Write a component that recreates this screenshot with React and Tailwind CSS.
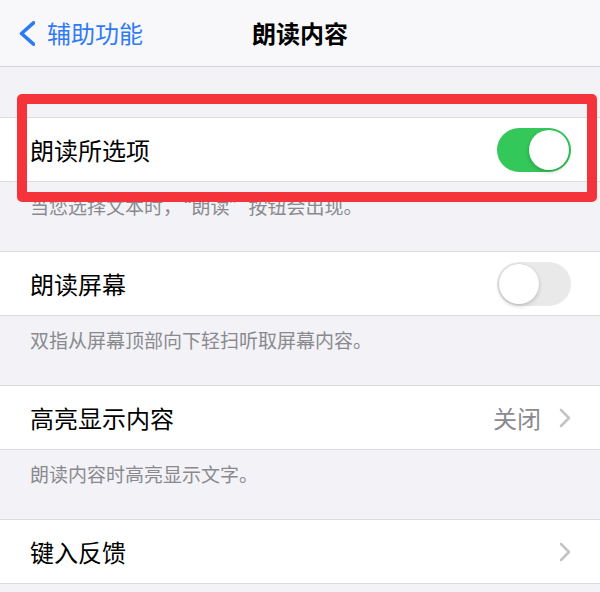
import React from "react";

const font = { fontFamily: '"Noto Sans CJK SC", "Noto Sans", sans-serif' };

function Toggle({ on }) {
  return (
    <div
      className={
        "w-[74px] h-[44px] rounded-full p-[2px] flex " +
        (on ? "bg-[#34c759] justify-end" : "bg-[#e9e9ea] justify-start")
      }
    >
      <div className="w-[40px] h-[40px] rounded-full bg-white shadow-[0_2px_4px_rgba(0,0,0,0.18),0_0_0_0.5px_rgba(0,0,0,0.06)]" />
    </div>
  );
}

function Chevron() {
  return (
    <svg width="12" height="20" viewBox="0 0 12 20" className="ml-[18px]">
      <polyline
        points="2,2 10,10 2,18"
        fill="none"
        stroke="#c4c4c7"
        strokeWidth="2.6"
        strokeLinecap="round"
        strokeLinejoin="round"
      />
    </svg>
  );
}

function Row({ label, right }) {
  return (
    <div className="h-[65px] bg-white border-y border-[#dcdce0] flex items-center justify-between pl-[30px] pr-[29px]">
      <span className="text-[24px] text-black leading-none">{label}</span>
      {right}
    </div>
  );
}

function Footer({ text }) {
  return (
    <div className="h-[69px] pl-[30px] pt-[13px]">
      <div className="text-[19px] leading-[22px] text-[#8a8a8e]">{text}</div>
    </div>
  );
}

export default function App() {
  return (
    <div className="w-[600px] h-[592px] bg-[#f2f2f7] overflow-hidden relative" style={font}>
      <div className="h-[67px] bg-[#f8f8fa] border-b border-[#d3d3d7] grid grid-cols-[1fr_auto_1fr] items-center">
        <div className="flex items-center pl-[19px]">
          <svg width="16" height="25" viewBox="0 0 16 25">
            <polyline
              points="14.5,1.8 2.5,12.5 14.5,23.2"
              fill="none"
              stroke="#2f7bf5"
              strokeWidth="3.6"
              strokeLinecap="round"
              strokeLinejoin="round"
            />
          </svg>
          <span className="ml-[12px] text-[24px] text-[#2f7bf5] leading-none">辅助功能</span>
        </div>
        <div className="text-[24px] font-semibold text-black leading-none">朗读内容</div>
        <div />
      </div>

      <div className="mt-[50px]">
        <Row label="朗读所选项" right={<Toggle on />} />
        <Footer text="当您选择文本时，“朗读”按钮会出现。" />
        <Row label="朗读屏幕" right={<Toggle on={false} />} />
        <Footer text="双指从屏幕顶部向下轻扫听取屏幕内容。" />
        <Row
          label="高亮显示内容"
          right={
            <div className="flex items-center">
              <span className="text-[24px] text-[#8a8a8e] leading-none">关闭</span>
              <Chevron />
            </div>
          }
        />
        <Footer text="朗读内容时高亮显示文字。" />
        <Row label="键入反馈" right={<Chevron />} />
      </div>

      <div className="absolute left-[17px] top-[94px] w-[580px] h-[108px] border-[10px] border-[#f4333a] rounded-[5px]" />
    </div>
  );
}
